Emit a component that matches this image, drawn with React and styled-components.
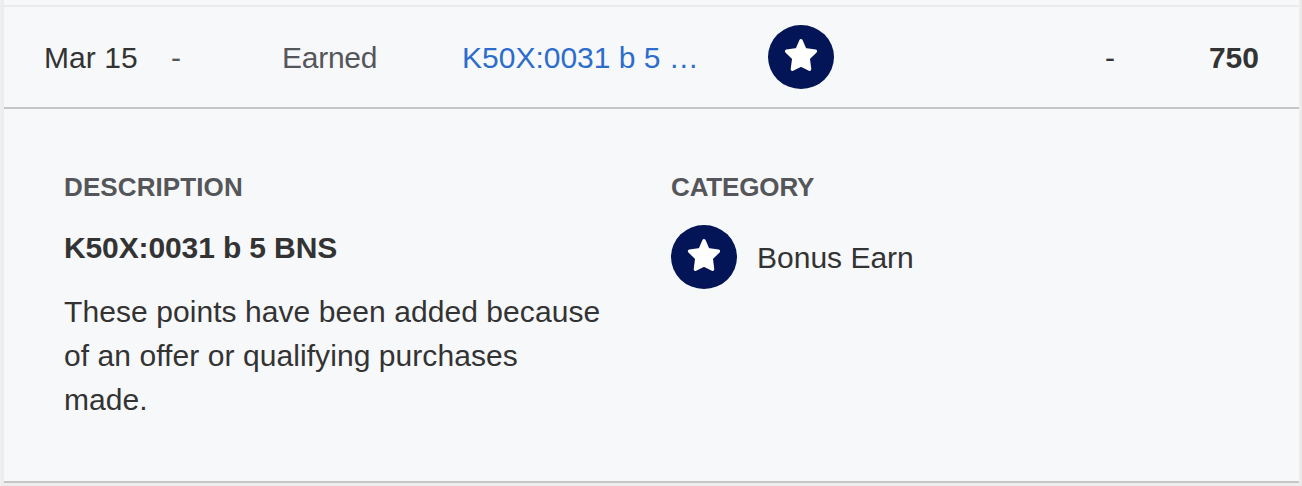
import styled, { createGlobalStyle } from "styled-components";

const transaction = {
  date: "Mar 15",
  posted: "-",
  type: "Earned",
  shortTitle: "K50X:0031 b 5 …",
  title: "K50X:0031 b 5 BNS",
  bonus: "-",
  points: "750",
  category: "Bonus Earn",
  description:
    "These points have been added because of an offer or qualifying purchases made.",
};

const StarBadge = () => (
  <StBadge>
    <svg width="34" height="34" viewBox="0 0 34 34">
      <path
        d="M17 2.8 L20.9 11.7 L31.4 13.3 L24.2 20.2 L25.6 31.2 L17 27 L8.4 31.2 L9.8 20.2 L2.6 13.3 L13.1 11.7 Z"
        fill="#fff"
        stroke="#fff"
        strokeWidth="3.4"
        strokeLinejoin="round"
      />
    </svg>
  </StBadge>
);

const App = () => {
  return (
    <StPage>
      <GlobalStyle />
      <StPanel>
        <StRow>
          <StText $spacing="0.05px">{transaction.date}</StText>
          <StText $color="#55565a">{transaction.posted}</StText>
          <StText $color="#55565a" $spacing="-0.25px">
            {transaction.type}
          </StText>
          <StLink href="#">{transaction.shortTitle}</StLink>
          <StarBadge />
          <StText $align="right">{transaction.bonus}</StText>
          <StText $align="right" $bold>
            {transaction.points}
          </StText>
        </StRow>
        <StDetail>
          <StDescription>
            <StHeading $spacing="0.1px">DESCRIPTION</StHeading>
            <StTitle>{transaction.title}</StTitle>
            <StParagraph>{transaction.description}</StParagraph>
          </StDescription>
          <div>
            <StHeading $spacing="-0.15px">CATEGORY</StHeading>
            <StCategory>
              <StarBadge />
              <StText>{transaction.category}</StText>
            </StCategory>
          </div>
        </StDetail>
      </StPanel>
    </StPage>
  );
};

export default App;

const GlobalStyle = createGlobalStyle`
  * {
    box-sizing: border-box;
  }

  body {
    margin: 0;
    overflow: hidden;
    background-color: #f0f0f1;
    font-family: "Liberation Sans", Arial, sans-serif;
    color: #333;
  }
`;

const StPage = styled.div`
  height: 486px;
  padding: 0 2px 0 3px;
  border-left: 1px solid #f0f0f1;
  border-right: 1px solid #e8e8e9;
  background-color: #ededee;
`;

const StPanel = styled.div`
  height: 483px;
  padding-top: 5px;
  border-bottom: 2px solid #c5c5c5;
  background-color: #f7f8fa;
`;

const StRow = styled.div`
  display: grid;
  grid-template-columns: 127px 111px 180px 306px 66px 1fr 144px;
  align-items: center;
  height: 104px;
  padding: 0 40px;
  border-top: 2px solid #ebebec;
  border-bottom: 2px solid #c5c5c5;
`;

const StText = styled.span`
  padding-top: 2px;
  font-size: 30px;
  line-height: 44px;
  color: ${({ $color }) => $color || "#333"};
  font-weight: ${({ $bold }) => ($bold ? 700 : 400)};
  text-align: ${({ $align }) => $align || "left"};
  letter-spacing: ${({ $spacing }) => $spacing || "0"};
`;

const StLink = styled.a`
  padding-top: 2px;
  font-size: 30px;
  line-height: 44px;
  color: #2c6dcb;
  text-decoration: none;
`;

const StBadge = styled.div`
  display: flex;
  align-items: center;
  justify-content: center;
  width: 66px;
  height: 64px;
  padding-bottom: 4px;
  border-radius: 50%;
  background-color: #031457;
`;

const StDetail = styled.div`
  display: grid;
  grid-template-columns: 607px 1fr;
  padding: 62px 60px 0;
`;

const StDescription = styled.div`
  width: 540px;
`;

const StHeading = styled.h3`
  margin: 0;
  font-size: 26px;
  line-height: 32px;
  color: #55565a;
  letter-spacing: ${({ $spacing }) => $spacing};
`;

const StTitle = styled.p`
  margin: 23px 0 0;
  font-size: 30px;
  font-weight: 700;
  line-height: 44px;
  letter-spacing: -0.12px;
`;

const StParagraph = styled.p`
  margin: 20px 0 0;
  font-size: 30px;
  line-height: 44px;
  letter-spacing: 0.07px;
`;

const StCategory = styled.div`
  display: flex;
  align-items: center;
  gap: 20px;
  margin-top: 22px;
`;
